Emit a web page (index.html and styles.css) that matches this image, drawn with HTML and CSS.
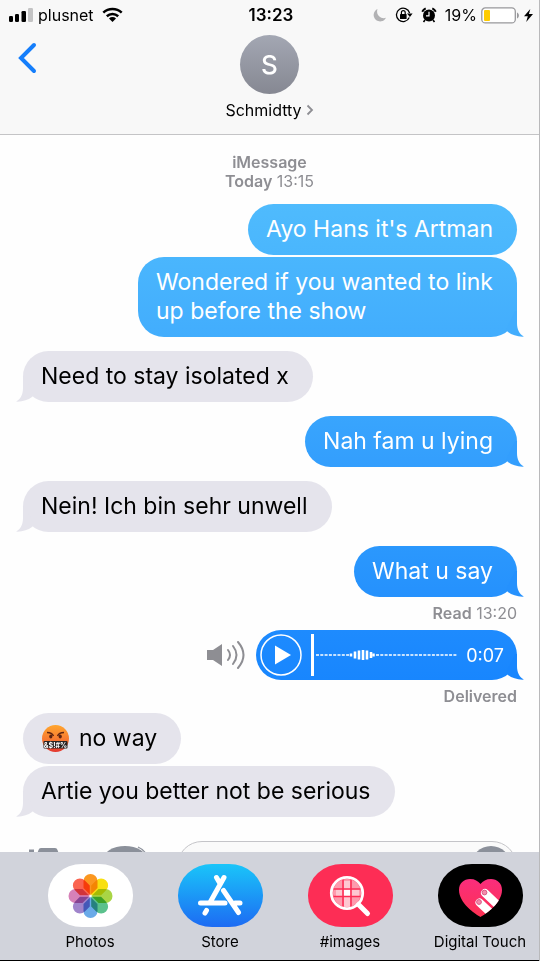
FILE: index.html
```html
<!DOCTYPE html>
<html lang="en">
<head>
<meta charset="utf-8">
<meta name="viewport" content="width=device-width, initial-scale=1">
<title>Messages</title>
<link rel="stylesheet" href="styles.css">
</head>
<body>
<svg class="defs" aria-hidden="true">
  <defs>
    <symbol id="tail" viewBox="0 0 34 26">
      <path d="M24 0H26V12C26 18 28 23 33 25.600C27 26 21 24 17 21L15 19Z"/>
    </symbol>
  </defs>
</svg>
<div class="screen">
  <header class="header">
    <div class="status">
      <div class="status-left">
        <svg width="25" height="16" viewBox="0 0 25 16" aria-hidden="true">
          <rect x="0" y="9" width="4" height="6" rx="1.300"/><rect x="6" y="7" width="4" height="8" rx="1.300"/><rect x="12.500" y="4" width="4.500" height="11" rx="1.300"/><rect x="19" y="1" width="5" height="14" rx="1.300" fill="#c3c3c4"/>
        </svg>
        <span>plusnet</span>
        <svg class="wifi" width="21" height="16" viewBox="0 0 21 16" aria-hidden="true">
          <g fill="none" stroke="#000" stroke-width="2.500"><path d="M1.300 5.600A13.500 13.500 0 0 1 19.700 5.600"/><path d="M4.800 9.200A8.500 8.500 0 0 1 16.200 9.200"/></g>
          <path d="M7 11.500A5 5 0 0 1 14 11.500L10.500 15Z"/>
        </svg>
      </div>
      <time class="clock">13:23</time>
      <div class="status-right">
        <svg width="14" height="14" viewBox="0 0 14 14" aria-hidden="true"><path d="M4.500 1A6.500 6.500 0 1 0 13 9.800C8 11.500 2.500 7 4.500 1Z" fill="#b2b2b4"/></svg>
        <svg width="18" height="16" viewBox="0 0 18 16" aria-hidden="true"><path d="M14.300 10.600A6.700 6.700 0 1 1 14.600 6" fill="none" stroke="#000" stroke-width="1.300"/><path d="M12 6.500H17.600L14.900 10Z"/><rect x="5" y="7" width="6.600" height="5" rx=".6"/><path d="M6.400 7V5.600A1.900 1.900 0 0 1 10.200 5.600V7" fill="none" stroke="#000" stroke-width="1.200"/></svg>
        <svg width="16" height="16" viewBox="0 0 16 16" aria-hidden="true"><circle cx="8" cy="8.500" r="6"/><path d="M1.200 4.800A8 8 0 0 1 4.700 1.400M11.300 1.400A8 8 0 0 1 14.800 4.800" fill="none" stroke="#000" stroke-width="1.900"/><path d="M4 13L2.500 15M12 13L13.500 15" stroke="#000" stroke-width="1.600"/><path d="M8 4.800V8.800H5" fill="none" stroke="#fff" stroke-width="1.200"/></svg>
        <span>19%</span>
        <svg width="39" height="17" viewBox="0 0 39 17" aria-hidden="true"><rect x=".8" y=".9" width="33.500" height="15" rx="3.500" fill="#fff" stroke="#98989b" stroke-width="1.300"/><rect x="3" y="3" width="6" height="11" rx="1" fill="#fc0"/><path d="M36 5.500C38.500 6.500 38.500 10.500 36 11.500Z" fill="#98989b"/></svg>
        <svg width="9" height="15" viewBox="0 0 9 15" aria-hidden="true"><path d="M6.300 1L0 8.300H3.800L2.200 14L9 6H4.900Z"/></svg>
      </div>
    </div>
    <div class="contact-row">
      <button class="back" type="button" aria-label="Back">
        <svg width="20" height="32" viewBox="0 0 20 32" aria-hidden="true"><path d="M17 3L4 16L17 29" fill="none" stroke="#157efb" stroke-width="4" stroke-linecap="round"/></svg>
      </button>
      <button class="contact" type="button">
        <span class="avatar">S</span>
        <span class="name">Schmidtty <svg width="8" height="12" viewBox="0 0 8 12" aria-hidden="true"><path d="M1.500 1.500L6 6L1.500 10.500" fill="none" stroke="#8e8e93" stroke-width="1.800"/></svg></span>
      </button>
    </div>
  </header>

  <main class="thread">
    <div class="stamp"><b>iMessage</b><br><b>Today</b> 13:15</div>
    <section class="group sent">
      <p class="bubble shade-1">Ayo Hans it's Artman</p>
      <p class="bubble shade-2">Wondered if you wanted to link<br>up before the show<svg class="tail" aria-hidden="true"><use href="#tail"/></svg></p>
    </section>
    <section class="group received">
      <p class="bubble">Need to stay isolated x<svg class="tail" aria-hidden="true"><use href="#tail"/></svg></p>
    </section>
    <section class="group sent">
      <p class="bubble shade-3">Nah fam u lying<svg class="tail" aria-hidden="true"><use href="#tail"/></svg></p>
    </section>
    <section class="group received">
      <p class="bubble">Nein! Ich bin sehr unwell<svg class="tail" aria-hidden="true"><use href="#tail"/></svg></p>
    </section>
    <section class="group sent with-receipt">
      <p class="bubble shade-4">What u say<svg class="tail" aria-hidden="true"><use href="#tail"/></svg></p>
      <div class="receipt"><b>Read</b> 13:20</div>
    </section>
    <section class="group sent with-receipt">
      <div class="voice-row">
        <svg width="38" height="30" viewBox="0 0 38 30" fill="none" stroke="#8e8e93" stroke-width="2" stroke-linecap="round" aria-hidden="true"><path d="M0 10H6L15 4V26L6 20H0Z" fill="#8e8e93" stroke="none"/><path d="M21 10Q25 15 21 20M26 6Q33 15 26 24M31 2Q42 15 31 28"/></svg>
        <div class="bubble voice shade-5">
          <button class="play" type="button" aria-label="Play audio message"><svg width="42" height="42" viewBox="0 0 42 42" aria-hidden="true"><circle cx="21" cy="21" r="20" fill="none" stroke="#fff" stroke-width="1.500"/><path d="M15 11.500L31 21L15 30.500Z" fill="#fff"/></svg></button>
          <svg class="wave" width="146" height="42" viewBox="0 0 146 42" aria-hidden="true"><rect x="0" y="0" width="3" height="42" fill="#fff"/><path d="M5 21H39M65 21H146" stroke="#fff" stroke-width="1.500" stroke-dasharray="3 1.300"/><path d="M40 19.500V22.500M62.500 19.500V22.500" stroke="#fff" stroke-width="2.500"/><path d="M44 17.500V24.500M48 16.500V25.500M52 16V26M56 16.500V25.500M60 18V24" stroke="#fff" stroke-width="2.600"/></svg>
          <span class="duration">0:07</span>
          <svg class="tail" aria-hidden="true"><use href="#tail"/></svg>
        </div>
      </div>
      <div class="receipt"><b>Delivered</b></div>
    </section>
    <section class="group received">
      <p class="bubble with-emoji"><svg width="29" height="29" viewBox="0 0 29 29" role="img" aria-label="Swearing face"><defs><linearGradient id="face" x2="0" y2="1"><stop stop-color="#ffa62e"/><stop offset=".55" stop-color="#f87832"/><stop offset="1" stop-color="#e3362f"/></linearGradient></defs><circle cx="14.500" cy="14.500" r="13.500" fill="url(#face)"/><path d="M6 8.500Q11 8.500 12.500 12M23 8.500Q18 8.500 16.500 12" fill="none" stroke="#5e2412" stroke-width="1.400"/><ellipse cx="9.800" cy="12.600" rx="1.600" ry="2" fill="#5e2412"/><ellipse cx="19.200" cy="12.600" rx="1.600" ry="2" fill="#5e2412"/><rect x="2.500" y="17" width="24" height="7.500" rx="1" fill="#292424"/><text x="14.500" y="23.500" text-anchor="middle" class="curse">&amp;$!#%</text></svg><span>no way</span></p>
      <p class="bubble">Artie you better not be serious<svg class="tail" aria-hidden="true"><use href="#tail"/></svg></p>
    </section>
  </main>

  <form class="compose">
    <button type="button" aria-label="Camera"><svg width="30" height="30" viewBox="0 0 30 30" aria-hidden="true"><path d="M0 8.500H5V11H0ZM0 13H8L9.500 9Q10 7 12 7H26Q28 7 28.500 9L30 13V30H0Z" fill="#8b909a"/></svg></button>
    <button type="button" aria-label="Digital Touch"><svg width="48" height="36" viewBox="0 0 48 36" aria-hidden="true"><ellipse cx="24" cy="19" rx="22" ry="14" fill="#8b909a"/><path d="M37 6Q42 8 46 14" fill="none" stroke="#8b909a" stroke-width="1.200"/></svg></button>
    <div class="field"><input type="text" aria-label="iMessage"><button type="button" aria-label="Record audio"><svg width="40" height="40" viewBox="0 0 40 40" aria-hidden="true"><circle cx="20" cy="20" r="20" fill="#8b909a"/></svg></button></div>
  </form>

  <nav class="dock" aria-label="Message apps">
    <button type="button">
      <svg width="85" height="63" viewBox="0 0 85 63" aria-hidden="true"><defs><path id="petal" d="M42.500 31L35.500 24V17A7 7 0 0 1 49.500 17V24Z"/></defs><rect width="85" height="63" rx="34" ry="31" fill="#fff"/>
        <g class="petals">
          <use href="#petal" fill="#fb9720"/>
          <use href="#petal" fill="#f8e012" transform="rotate(45 42.500 32)"/>
          <use href="#petal" fill="#a9d545" transform="rotate(90 42.500 32)"/>
          <use href="#petal" fill="#5bc18c" transform="rotate(135 42.500 32)"/>
          <use href="#petal" fill="#6aaae8" transform="rotate(180 42.500 32)"/>
          <use href="#petal" fill="#a084cb" transform="rotate(225 42.500 32)"/>
          <use href="#petal" fill="#d681b8" transform="rotate(270 42.500 32)"/>
          <use href="#petal" fill="#fa6450" transform="rotate(315 42.500 32)"/>
        </g>
      </svg>
      <span>Photos</span>
    </button>
    <button type="button">
      <svg width="85" height="63" viewBox="0 0 85 63" aria-hidden="true"><defs><linearGradient id="store" x2="0" y2="1"><stop stop-color="#1ac5f9"/><stop offset="1" stop-color="#1d6bf3"/></linearGradient></defs><rect width="85" height="63" rx="34" ry="31" fill="url(#store)"/>
        <g fill="none" stroke="#fff" stroke-width="5" stroke-linecap="round"><path d="M46 13.500L32 38.500M38.500 13.500L42 19.500M45.500 26.500L60.500 48.500M28.500 46.500L27 49M22.500 39H47M57 39H62"/></g>
      </svg>
      <span>Store</span>
    </button>
    <button type="button">
      <svg width="85" height="63" viewBox="0 0 85 63" aria-hidden="true"><defs><clipPath id="lens"><circle cx="39" cy="29" r="14"/></clipPath></defs><rect width="85" height="63" rx="34" ry="31" fill="#fd2d55"/>
        <path d="M50 40L59.500 49.500" stroke="#fff" stroke-width="5" stroke-linecap="round"/>
        <g clip-path="url(#lens)"><rect x="24" y="14" width="30" height="30" fill="#fd9aad"/><path d="M28 25.500H35V32H28ZM36 17H42V25H36ZM43 25.500H51V32H43ZM36 33H42V43H36Z" fill="#fec7d1"/><rect x="35.500" y="25.500" width="7" height="6.500" fill="#fff"/><path d="M35 14V44M43 14V44M24 25H54M24 32.500H54" stroke="#fd2d55" stroke-width="1.600"/></g>
        <circle cx="39" cy="29" r="15.700" fill="none" stroke="#fff" stroke-width="2.800"/>
      </svg>
      <span>#images</span>
    </button>
    <button type="button">
      <svg width="85" height="63" viewBox="0 0 85 63" aria-hidden="true"><defs><linearGradient id="heart" x2="0" y2="1"><stop stop-color="#fa2d7d"/><stop offset="1" stop-color="#fd3152"/></linearGradient><path id="heart-shape" d="M42.500 53C37 50 21 39 21 26C21 19 26 15 32 15C37 15 40 17 42.500 20C45 17 48 15 53 15C59 15 64 19 64 26C64 39 48 50 42.500 53Z"/><clipPath id="heart-clip"><use href="#heart-shape"/></clipPath></defs><rect width="85" height="63" rx="34" ry="31" fill="#000"/>
        <use href="#heart-shape" fill="url(#heart)"/>
        <g clip-path="url(#heart-clip)" fill="none" stroke="#fff" stroke-width="8" stroke-linecap="round"><path d="M47 29L65 46M41.500 38.500L58 54"/></g>
        <g fill="#f58bab" stroke="#d75b86"><circle cx="46.500" cy="28.500" r="2.400"/><circle cx="41" cy="38" r="2.400"/></g>
      </svg>
      <span>Digital Touch</span>
    </button>
  </nav>
</div>
</body>
</html>
```
FILE: styles.css
```css
* { box-sizing: border-box; }

body {
  margin: 0;
  background: #fefefe;
  color: #000;
  font-family: Inter, "Liberation Sans", sans-serif;
}

button {
  margin: 0;
  padding: 0;
  border: 0;
  background: none;
  color: inherit;
  font: inherit;
}

svg { display: block; flex: none; }
.defs { position: absolute; width: 0; height: 0; }

.screen {
  display: flex;
  flex-direction: column;
  height: 100vh;
  border-right: 1px solid #b9b9bb;
  overflow: hidden;
}

/* Header */
.header {
  flex: none;
  background: #f8f8f8;
  border-bottom: 1px solid #c4c4c6;
  padding-bottom: 14px;
}

.status {
  display: grid;
  grid-template-columns: 1fr auto 1fr;
  align-items: center;
  height: 30px;
  padding: 0 6px 0 9px;
  font-size: 16px;
}

.status-left, .status-right { display: flex; align-items: center; }
.status-left { gap: 4px; }
.wifi { margin-left: 4px; }
.status-right { justify-content: flex-end; gap: 8px; }
.status-right span { margin-right: -4px; }
.status-right svg:last-child { margin-left: -4px; }
.clock { font-size: 17px; font-weight: 600; }

.contact-row {
  display: grid;
  grid-template-columns: 1fr auto 1fr;
  align-items: start;
  padding-top: 5px;
}

.back { justify-self: start; padding: 7px 17px; }

.contact {
  display: flex;
  flex-direction: column;
  align-items: center;
  gap: 6px;
}

.avatar {
  width: 59px;
  height: 59px;
  border-radius: 50%;
  background: linear-gradient(#a3a7b3, #868892);
  color: #fff;
  font-size: 26px;
  font-weight: 500;
  line-height: 59px;
}

.name {
  display: flex;
  align-items: center;
  gap: 4px;
  font-size: 16px;
  line-height: 20px;
}

/* Thread */
.thread {
  flex: none;
  padding: 18px 22px 24px;
}

.stamp, .receipt {
  color: #8e8e93;
  font-size: 16px;
}
.stamp b, .receipt b { font-weight: 600; }
.stamp { margin-bottom: 13px; line-height: 19px; text-align: center; }
.receipt { line-height: 33px; }

.group {
  display: flex;
  flex-direction: column;
  gap: 2px;
  margin-bottom: 14px;
}
.group:last-child { margin-bottom: 0; }
.sent { align-items: flex-end; }
.received { align-items: flex-start; }
.with-receipt { gap: 0; margin-bottom: 0; }

.bubble {
  --top: #e5e4ec;
  --bottom: #e5e4ec;
  position: relative;
  isolation: isolate;
  margin: 0;
  padding: 11px 24px 11px 18px;
  border-radius: 26px;
  background: linear-gradient(var(--top), var(--bottom));
  font-size: 23px;
  line-height: 29px;
}
.sent .bubble { color: #fff; }
.received .bubble { margin-left: 1px; }

.shade-1 { --top: #4fbbfd; --bottom: #4ab6fd; }
.shade-2 { --top: #4ab6fd; --bottom: #42adfd; }
.shade-3 { --top: #39a5fd; --bottom: #339efd; }
.shade-4 { --top: #2b98fd; --bottom: #2591fd; }
.shade-5 { --top: #1e8bfe; --bottom: #1886fe; }

.tail {
  position: absolute;
  z-index: -1;
  right: -8px;
  bottom: 0;
  width: 34px;
  height: 26px;
  fill: var(--bottom);
}
.received .tail { right: auto; left: -8px; transform: scaleX(-1); }

.with-emoji { display: flex; align-items: center; gap: 9px; }
.curse { fill: #fff; font-size: 7px; font-weight: 700; }

.voice-row { display: flex; align-items: center; gap: 11px; }
.sent .voice {
  display: flex;
  align-items: center;
  height: 50px;
  padding: 0 13px 0 4px;
}
.wave { margin: 0 9px; }
.duration { font-size: 18px; }

/* Compose row, tucked behind the app dock */
.compose {
  display: flex;
  flex: 1;
  align-items: flex-start;
  min-height: 0;
  margin: 0;
  padding: 0 22px 0 29px;
  overflow: hidden;
}
.compose > button:nth-child(2) { margin-left: 42px; }
.field {
  display: flex;
  flex: 1;
  justify-content: flex-end;
  height: 50px;
  margin-left: 28px;
  padding: 4px 5px;
  border: 1px solid #c4c4c8;
  border-radius: 25px;
  background: #fafafa;
}
.field input {
  flex: 1;
  min-width: 0;
  border: 0;
  background: transparent;
  font: inherit;
}

/* Dock */
.dock {
  display: flex;
  flex: none;
  justify-content: space-between;
  padding: 12px 11px 8px 42px;
  border-bottom: 1px solid #000;
  background: #d1d3db;
}
.dock button {
  display: flex;
  flex-direction: column;
  align-items: center;
  gap: 5px;
  width: 96px;
  font-size: 15px;
  line-height: 20px;
  white-space: nowrap;
}
.petals use { mix-blend-mode: multiply; }
```
